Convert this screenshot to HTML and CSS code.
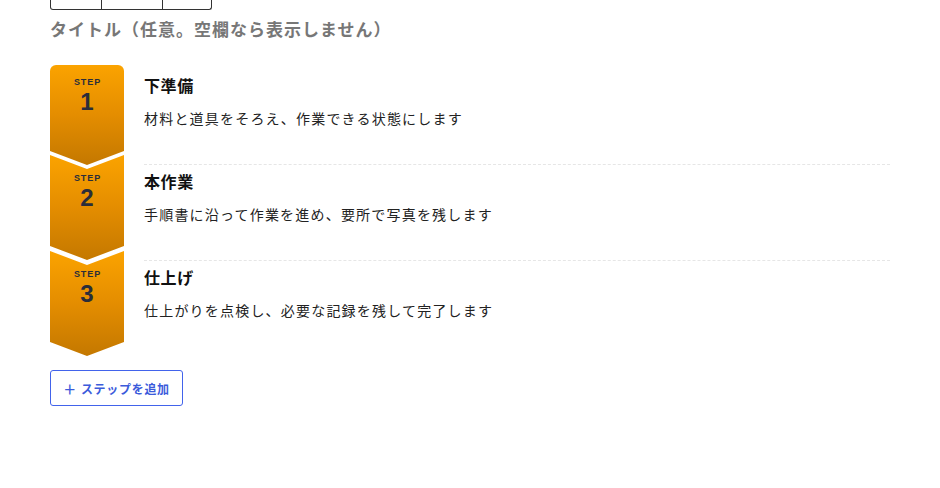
FILE: index.html
```html
<!DOCTYPE html>
<html lang="ja">
<head>
<meta charset="utf-8">
<link rel="stylesheet" href="styles.css">
</head>
<body>
<div class="page">
  <div class="toolbar">
    <div class="seg seg-a"></div>
    <div class="seg seg-b"></div>
    <div class="seg seg-c"></div>
  </div>
  <h2 class="heading">タイトル（任意。空欄なら表示しません）</h2>
  <ol class="steps">
    <li class="step first">
      <div class="badge"><span class="badge-label">STEP</span><span class="badge-num">1</span></div>
      <div class="body">
        <div class="title">下準備</div>
        <div class="desc">材料と道具をそろえ、作業できる状態にします</div>
      </div>
    </li>
    <li class="step">
      <div class="badge"><span class="badge-label">STEP</span><span class="badge-num">2</span></div>
      <div class="body">
        <div class="title">本作業</div>
        <div class="desc">手順書に沿って作業を進め、要所で写真を残します</div>
      </div>
    </li>
    <li class="step last">
      <div class="badge"><span class="badge-label">STEP</span><span class="badge-num">3</span></div>
      <div class="body">
        <div class="title">仕上げ</div>
        <div class="desc">仕上がりを点検し、必要な記録を残して完了します</div>
      </div>
    </li>
  </ol>
  <button class="add-btn" type="button"><span class="plus">＋</span>ステップを追加</button>
</div>
</body>
</html>
```

FILE: styles.css
```css
* { box-sizing: border-box; }
html, body {
  margin: 0;
  padding: 0;
  background: #ffffff;
}
body {
  font-family: "Liberation Sans", "Noto Sans CJK JP", sans-serif;
  color: #222;
}
.page {
  padding: 0 50px;
  width: 940px;
}
.toolbar {
  display: flex;
  width: 162px;
  height: 10px;
  border: 1px solid #333;
  border-top: none;
  border-radius: 0 0 3px 3px;
}
.seg { height: 100%; border-right: 1px solid #333; }
.seg-a { width: 51px; }
.seg-b { width: 61px; }
.seg-c { flex: 1; border-right: none; }
.heading {
  margin: 10px 0 0;
  font-size: 17px;
  line-height: 22px;
  font-weight: 700;
  color: #777;
  letter-spacing: 1px;
}
.steps {
  list-style: none;
  margin: 27px 0 0;
  padding: 0;
}
.step {
  display: flex;
  gap: 20px;
  height: 96px;
}
.badge {
  flex: 0 0 74px;
  height: 105px;
  margin-top: -10px;
  padding-top: 18px;
  display: flex;
  flex-direction: column;
  align-items: center;
  background: linear-gradient(180deg, #fba300 0%, #e48d00 50%, #c47800 100%);
  clip-path: polygon(0 0, 50% 14px, 100% 0, 100% calc(100% - 14px), 50% 100%, 0 calc(100% - 14px));
  color: #2a2d3a;
  position: relative;
  z-index: 1;
}
.step.first .badge {
  height: 100px;
  margin-top: -4px;
  padding-top: 12px;
  border-radius: 6px 6px 0 0;
  clip-path: polygon(0 0, 100% 0, 100% calc(100% - 14px), 50% 100%, 0 calc(100% - 14px));
}
.badge-label {
  font-size: 9px;
  line-height: 10px;
  font-weight: 700;
  letter-spacing: 0.9px;
  padding-left: 1px;
}
.badge-num {
  font-size: 24px;
  line-height: 28px;
  font-weight: 700;
  margin-top: 1px;
}
.body {
  flex: 1;
  border-bottom: 1px dashed #e6e6e6;
  padding-top: 7px;
}
.step.last .body { border-bottom: none; }
.title {
  font-size: 16px;
  line-height: 22px;
  font-weight: 700;
  color: #111;
  letter-spacing: 0.6px;
}
.desc {
  margin-top: 10px;
  font-size: 14px;
  line-height: 22px;
  color: #222;
  letter-spacing: 1.2px;
}
.add-btn {
  margin-top: 13px;
  height: 36px;
  width: 133px;
  padding: 0;
  display: flex;
  align-items: center;
  justify-content: center;
  background: #fff;
  border: 1px solid #4263eb;
  border-radius: 3px;
  color: #3b5bdb;
  font-family: "Liberation Sans", "Noto Sans CJK JP", sans-serif;
  font-size: 12px;
  font-weight: 700;
  letter-spacing: 0.7px;
}
.plus { margin-right: 4px; font-size: 13px; }
```
